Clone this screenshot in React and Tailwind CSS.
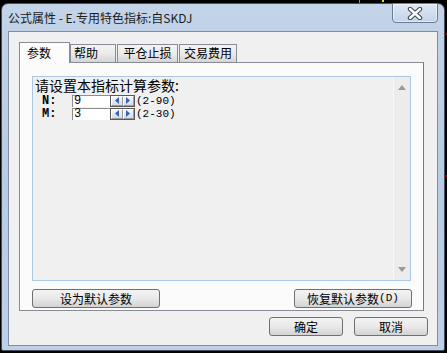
import React from "react";

const cjk = { fontFamily: '"Noto Sans CJK SC", "Liberation Sans", sans-serif' };
const mono = { fontFamily: '"Liberation Mono", "Noto Sans CJK SC", monospace' };

const Btn = ({ w, children }) => (
  <button
    className={`${w} h-[19px] rounded-[3px] border border-[#707070] bg-gradient-to-b from-[#f3f3f3] via-[#e9e9e9] to-[#d3d3d3] text-[12px] leading-[17px] text-black flex items-center justify-center`}
    style={cjk}
  >
    {children}
  </button>
);

const Spinner = () => (
  <div className="flex h-[12px] w-[25px] border border-[#5a5a5a] bg-[#e8e8e8]">
    {["M6 1 L2 4.5 L6 8 Z", "M2 1 L6 4.5 L2 8 Z"].map((d, i) => (
      <div
        key={i}
        className="flex-1 flex items-center justify-center border border-t-white border-l-white border-r-[#9a9a9a] border-b-[#9a9a9a] bg-gradient-to-b from-[#f4f6fa] to-[#d6dce6]"
      >
        <svg width="8" height="9" viewBox="0 0 8 9">
          <path d={d} fill="#3565b0" />
        </svg>
      </div>
    ))}
  </div>
);

const ParamRow = ({ name, value, range }) => (
  <div className="flex items-center h-[13px]">
    <span className="w-[37px] pl-[7px] text-[12px] font-bold leading-[12px] text-black" style={mono}>
      {name}:
    </span>
    <div
      className="w-[38px] h-[12px] bg-white border-l border-t border-[#8e8e8e] pl-[1px] text-[12px] leading-[11px] text-black"
      style={mono}
    >
      {value}
    </div>
    <Spinner />
    <span className="ml-[1px] text-[11px] leading-[12px] text-black" style={mono}>
      ({range})
    </span>
  </div>
);

const Tab = ({ label, w, active, left }) =>
  active ? (
    <div
      className={`${w} h-[21px] border-l border-t border-r border-[#898c95] bg-[#fcfcfc] pl-[7px] pt-[1px] text-[12px] leading-[18px] text-black`}
      style={cjk}
    >
      {label}
    </div>
  ) : (
    <div
      className={`${w} h-[18px] mb-[1px] border-l border-t border-r border-[#898c95] bg-gradient-to-b from-[#f3f3f3] via-[#ebebeb] to-[#d5d5d5] text-[12px] leading-[16px] text-black flex ${left ? "pl-[3px]" : "justify-center"}`}
      style={cjk}
    >
      {label}
    </div>
  );

export default function App() {
  return (
    <div className="relative w-[447px] h-[353px] bg-black overflow-hidden pt-[3px] pl-[1px]">
      <span className="absolute left-[359px] top-0 w-px h-[3px] bg-[#00c8c8]" />
      <span className="absolute left-[382px] top-0 w-[2px] h-[2px] bg-[#e8e000]" />
      <span className="absolute left-[446px] top-[33px] w-px h-[2px] bg-[#d00000]" />
      <span className="absolute left-[446px] top-[175px] w-px h-[2px] bg-[#d00000]" />

      <div className="w-[444px] h-[348px] rounded-t-[7px] rounded-b-[2px] border border-[#44505f] bg-gradient-to-b from-[#c3d4e9] via-[#b7cbe2] to-[#bed0e7] flex flex-col px-[6px] pb-[4px]">
        {/* title bar */}
        <div className="h-[27px] flex justify-between">
          <div className="pt-[6px] text-[12px] leading-[16px] text-[#1b1b1b]" style={cjk}>
            公式属性 - E.专用特色指标:自SKDJ
          </div>
          <div className="-mt-px w-[46px] h-[20px] rounded-b-[4px] border border-[#6b7a8e] bg-gradient-to-b from-[#dfe8f3] to-[#c3d3e7] flex items-center justify-center shadow-[inset_0_0_0_1px_rgba(255,255,255,0.5)]">
            <svg width="16" height="13" viewBox="0 0 16 13">
              <path d="M3 2 L13 11 M13 2 L3 11" stroke="#3b4656" strokeWidth="4.4" strokeLinecap="round" />
              <path d="M3 2 L13 11 M13 2 L3 11" stroke="#ffffff" strokeWidth="2.4" strokeLinecap="round" />
            </svg>
          </div>
        </div>

        {/* client */}
        <div className="w-[430px] h-[315px] border border-[#7d8fa6] bg-[#f0f0f0] flex flex-col">
          <div className="ml-[10px] mt-[10px] h-[21px] -mb-px flex items-end relative z-10">
            <Tab label="参数" w="w-[51px]" active />
            <Tab label="帮助" w="w-[46px]" left />
            <div className="w-px" />
            <Tab label="平仓止损" w="w-[61px]" />
            <div className="w-px" />
            <Tab label="交易费用" w="w-[58px]" />
          </div>

          <div className="ml-[10px] w-[405px] h-[249px] border border-[#898c95] border-r-[#7a7a7a] bg-[#fbfbfb] flex flex-col">
            <div className="ml-[12px] mt-[13px] w-[379px] h-[205px] border border-[#a9c9e4] bg-[#f0f0f0] flex">
              <div className="flex-1 pl-[2px]">
                <div className="h-[17px] text-[14px] leading-[16px] text-black" style={cjk}>
                  请设置本指标计算参数:
                </div>
                <ParamRow name="N" value="9" range="2-90" />
                <ParamRow name="M" value="3" range="2-30" />
              </div>
              <div className="w-[17px] border-l border-[#f7f7f7] bg-[#ececec] flex flex-col items-center justify-between pt-[8px] pb-[8px]">
                <svg width="8" height="5" viewBox="0 0 8 5">
                  <path d="M0 5 L4 0 L8 5 Z" fill="#9a9a9a" />
                </svg>
                <svg width="8" height="5" viewBox="0 0 8 5">
                  <path d="M0 0 L4 5 L8 0 Z" fill="#9a9a9a" />
                </svg>
              </div>
            </div>
            <div className="mt-[8px] ml-[12px] mr-[11px] flex justify-between">
              <Btn w="w-[128px]">设为默认参数</Btn>
              <Btn w="w-[118px]">
                恢复默认参数<span className="text-[11px]" style={mono}>(D)</span>
              </Btn>
            </div>
          </div>

          <div className="mt-[6px] pr-[9px] flex justify-end gap-[11px]">
            <Btn w="w-[74px]">确定</Btn>
            <Btn w="w-[74px]">取消</Btn>
          </div>
        </div>
      </div>
    </div>
  );
}
